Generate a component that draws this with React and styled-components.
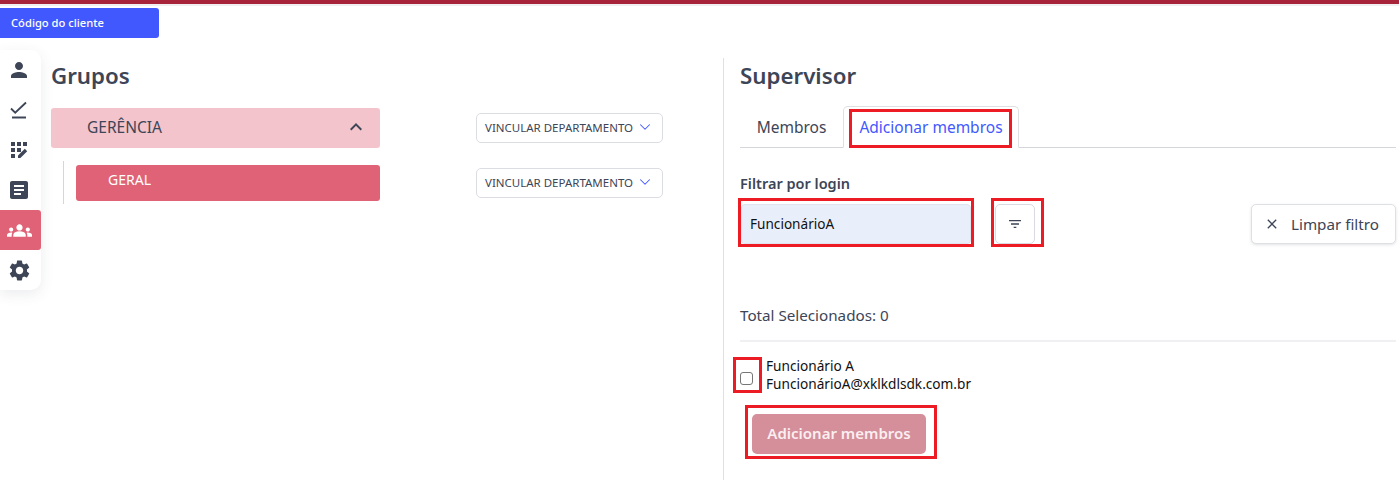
import styled, { createGlobalStyle } from 'styled-components';
import {
  MdPerson,
  MdArticle,
  MdGroups,
  MdSettings,
  MdExpandLess,
  MdFilterList,
  MdClose,
} from 'react-icons/md';
import { LuChevronDown } from 'react-icons/lu';

const GlobalStyle = createGlobalStyle`
  html, body {
    margin: 0;
    padding: 0;
    background: #fff;
    font-family: "Noto Sans", "Open Sans", sans-serif;
    color: #3d4556;
  }
  * {
    box-sizing: border-box;
  }
`;

const Page = styled.div`
  width: 1399px;
  height: 480px;
  overflow: hidden;
  background: #fff;
`;

const TopBar = styled.div`
  height: 6px;
  background: #f0f0f2;
  border-top: 4px solid #a8243a;
`;

const ClientButton = styled.button`
  display: block;
  width: 159px;
  height: 30px;
  margin-top: 2px;
  padding: 0 0 1px 11px;
  border: 0;
  border-radius: 0 3px 3px 0;
  background: #4258ff;
  color: #fff;
  font-family: inherit;
  font-size: 11.2px;
  font-weight: 500;
  text-align: left;
`;

const Body = styled.div`
  display: flex;
  align-items: flex-start;
  margin-top: 12px;
`;

const Sidebar = styled.nav`
  flex: none;
  width: 41px;
  height: 240px;
  border-radius: 0 10px 10px 0;
  background: #fff;
  box-shadow: 0 4px 14px rgba(60, 70, 90, 0.1);
`;

const SideItem = styled.div`
  display: flex;
  align-items: center;
  justify-content: center;
  height: 40px;
  padding-right: 3px;
  border-radius: 0 3px 3px 0;
  background: ${(p) => (p.$active ? '#e06277' : 'transparent')};
  color: ${(p) => (p.$active ? '#fff' : '#3d4556')};
`;

const GroupsPanel = styled.section`
  flex: none;
  width: 672px;
  margin-left: 10px;
`;

const Title = styled.h2`
  margin: 0;
  height: 58px;
  padding-top: 9px;
  font-size: 22.3px;
  line-height: 34px;
  font-weight: 600;
  color: #3d4556;
`;

const GroupRow = styled.div`
  display: flex;
  align-items: flex-start;
`;

const ChildRow = styled(GroupRow)`
  margin-top: 13px;
  padding-left: 12px;
`;

const GroupTree = styled.div`
  width: 317px;
  height: 43px;
  padding: 4px 0 0 12px;
  border-left: 1px solid #d5d6dc;
`;

const ParentGroup = styled.div`
  display: flex;
  align-items: center;
  justify-content: space-between;
  width: 329px;
  height: 40px;
  padding: 0 12px 2px 36px;
  border-radius: 3px;
  background: #f3c4cb;
  font-size: 15.5px;
  color: #3d4556;
`;

const ChildGroup = styled.div`
  width: 304px;
  height: 36px;
  padding: 5px 0 0 32px;
  border-radius: 3px;
  background: #e06277;
  color: #fff;
  font-size: 14px;
  line-height: 20px;
`;

const LinkSelect = styled.button`
  display: flex;
  align-items: center;
  justify-content: space-between;
  width: 187px;
  height: 30px;
  padding: 0 8px 2px;
  border: 1px solid #dcdde3;
  border-radius: 5px;
  background: #fff;
  color: #3d4556;
  font-family: inherit;
  font-size: 11.5px;
  white-space: nowrap;
  svg {
    color: #4258ff;
  }
`;

const ParentSelect = styled(LinkSelect)`
  margin: 5px 0 0 96px;
`;

const ChildSelect = styled(LinkSelect)`
  margin: 7px 0 0 96px;
`;

const SupervisorPanel = styled.section`
  flex: none;
  width: 673px;
  height: 422px;
  margin-top: 8px;
  padding-left: 16px;
  border-left: 1px solid #dfe0e4;
`;

const SupervisorTitle = styled(Title)`
  height: 48px;
  padding-top: 1px;
`;

const Tabs = styled.div`
  display: flex;
  height: 42px;
  border-bottom: 1px solid #d5d6dc;
`;

const Tab = styled.div`
  display: flex;
  justify-content: center;
  align-items: ${(p) => (p.$active ? 'flex-start' : 'center')};
  width: ${(p) => (p.$active ? '176px' : '103px')};
  height: ${(p) => (p.$active ? '42px' : '41px')};
  padding-top: ${(p) => (p.$active ? '2px' : '0')};
  padding-right: ${(p) => (p.$active ? '2px' : '0')};
  border: 1px solid ${(p) => (p.$active ? '#dfe0e4' : 'transparent')};
  border-bottom: ${(p) => (p.$active ? '1px solid #fff' : '0')};
  border-radius: 5px 5px 0 0;
  background: #fff;
  color: ${(p) => (p.$active ? '#4258ff' : '#3d4556')};
  font-size: 15.5px;
  white-space: nowrap;
`;

/* caixas vermelhas da anotação */
const Marked = styled.div`
  flex: none;
  border: 3px solid #ed1c24;
`;

const TabMark = styled(Marked)`
  width: 163px;
  height: 39px;
  padding-left: 2px;
  text-align: center;
  line-height: 31px;
`;

const FilterLabel = styled.div`
  margin-top: 25px;
  font-size: 14.5px;
  line-height: 20px;
  font-weight: 600;
  color: #3d4556;
`;

const FilterRow = styled.div`
  display: flex;
  align-items: flex-start;
  height: 49px;
  margin-top: 5px;
`;

const InputMark = styled(Marked)`
  width: 236px;
  height: 49px;
  margin-left: -2px;
  padding-top: 3px;
`;

const FilterInput = styled.div`
  display: flex;
  align-items: center;
  width: 230px;
  height: 40px;
  padding: 0 8px 1px;
  border: 1px solid #dfe3ee;
  border-radius: 4px;
  background: #e8effb;
  color: #111;
  font-size: 13.6px;
`;

const ButtonMark = styled(Marked)`
  width: 53px;
  height: 49px;
  margin-left: 17px;
  padding: 3px 0 0 1px;
`;

const FilterButton = styled.div`
  display: flex;
  align-items: center;
  justify-content: center;
  width: 40px;
  height: 40px;
  border: 1px solid #d9dae2;
  border-radius: 5px;
  background: #fff;
  color: #3d4556;
`;

const ClearButton = styled.button`
  display: flex;
  align-items: center;
  gap: 11px;
  width: 145px;
  height: 40px;
  margin: 6px 0 0 auto;
  padding: 0 0 1px 12px;
  border: 1px solid #dfe0e4;
  border-radius: 5px;
  background: #fff;
  box-shadow: 0 1px 3px rgba(60, 70, 90, 0.15);
  color: #3d4556;
  font-family: inherit;
  font-size: 15.2px;
  white-space: nowrap;
`;

const TotalRow = styled.div`
  height: 38px;
  margin-top: 57px;
  border-bottom: 2px solid #f0f0f2;
  font-size: 15.2px;
  line-height: 22px;
  color: #3d4556;
`;

const MemberRow = styled.div`
  display: flex;
  align-items: center;
  margin-top: 15px;
`;

const CheckMark = styled(Marked)`
  display: flex;
  align-items: center;
  justify-content: center;
  width: 29px;
  height: 36px;
  margin-left: -7px;
  padding: 7px 2px 0 0;
`;

const CheckBox = styled.span`
  display: block;
  width: 13px;
  height: 13px;
  border: 1px solid #767676;
  border-radius: 3px;
  background: #fff;
`;

const MemberInfo = styled.div`
  margin-left: 4px;
  font-size: 13.65px;
  line-height: 18px;
  color: #111;
  white-space: nowrap;
`;

const AddMark = styled(Marked)`
  width: 192px;
  height: 54px;
  margin: 12px 0 0 5px;
  padding: 6px 0 0 4px;
`;

const AddButton = styled.button`
  display: block;
  width: 174px;
  height: 40px;
  padding: 0 0 2px;
  border: 0;
  border-radius: 5px;
  background: #d48f9b;
  color: #fbeef0;
  font-family: inherit;
  font-size: 15px;
  font-weight: 600;
  white-space: nowrap;
`;

const CheckLine = () => (
  <svg width="18" height="18" viewBox="0 0 18 18" fill="none" stroke="currentColor" strokeWidth="2">
    <path d="M1 7.500l4.200 4.200L16 1.500" strokeWidth="1.8" />
    <path d="M2 16.500h14" />
  </svg>
);

const GridPencil = () => (
  <svg width="18" height="17" viewBox="0 0 18 17" fill="currentColor">
    <rect x="1" y="0" width="4" height="4" />
    <rect x="7" y="0" width="4" height="4" />
    <rect x="13" y="0" width="4" height="4" />
    <rect x="1" y="6" width="4" height="4" />
    <rect x="7" y="6" width="4" height="4" />
    <rect x="1" y="12" width="4" height="4" />
    <path d="M8 16v-2.400L14.800 6.800l2.400 2.400L10.400 16z" />
  </svg>
);

const App = () => {
  return (
    <Page>
      <GlobalStyle />
      <TopBar />
      <ClientButton>Código do cliente</ClientButton>
      <Body>
        <Sidebar>
          <SideItem><MdPerson size={24} /></SideItem>
          <SideItem><CheckLine /></SideItem>
          <SideItem><GridPencil /></SideItem>
          <SideItem><MdArticle size={24} /></SideItem>
          <SideItem $active><MdGroups size={25} /></SideItem>
          <SideItem><MdSettings size={25} /></SideItem>
        </Sidebar>
        <GroupsPanel>
          <Title>Grupos</Title>
          <GroupRow>
            <ParentGroup>
              GERÊNCIA
              <MdExpandLess size={24} />
            </ParentGroup>
            <ParentSelect>
              VINCULAR DEPARTAMENTO
              <LuChevronDown size={18} strokeWidth={1.4} />
            </ParentSelect>
          </GroupRow>
          <ChildRow>
            <GroupTree>
              <ChildGroup>GERAL</ChildGroup>
            </GroupTree>
            <ChildSelect>
              VINCULAR DEPARTAMENTO
              <LuChevronDown size={18} strokeWidth={1.4} />
            </ChildSelect>
          </ChildRow>
        </GroupsPanel>
        <SupervisorPanel>
          <SupervisorTitle>Supervisor</SupervisorTitle>
          <Tabs>
            <Tab>Membros</Tab>
            <Tab $active>
              <TabMark>Adicionar membros</TabMark>
            </Tab>
          </Tabs>
          <FilterLabel>Filtrar por login</FilterLabel>
          <FilterRow>
            <InputMark>
              <FilterInput>FuncionárioA</FilterInput>
            </InputMark>
            <ButtonMark>
              <FilterButton><MdFilterList size={16} /></FilterButton>
            </ButtonMark>
            <ClearButton>
              <MdClose size={16} />
              Limpar filtro
            </ClearButton>
          </FilterRow>
          <TotalRow>Total Selecionados: 0</TotalRow>
          <MemberRow>
            <CheckMark><CheckBox /></CheckMark>
            <MemberInfo>
              Funcionário A
              <br />
              FuncionárioA@xklkdlsdk.com.br
            </MemberInfo>
          </MemberRow>
          <AddMark>
            <AddButton>Adicionar membros</AddButton>
          </AddMark>
        </SupervisorPanel>
      </Body>
    </Page>
  );
};

export default App;
